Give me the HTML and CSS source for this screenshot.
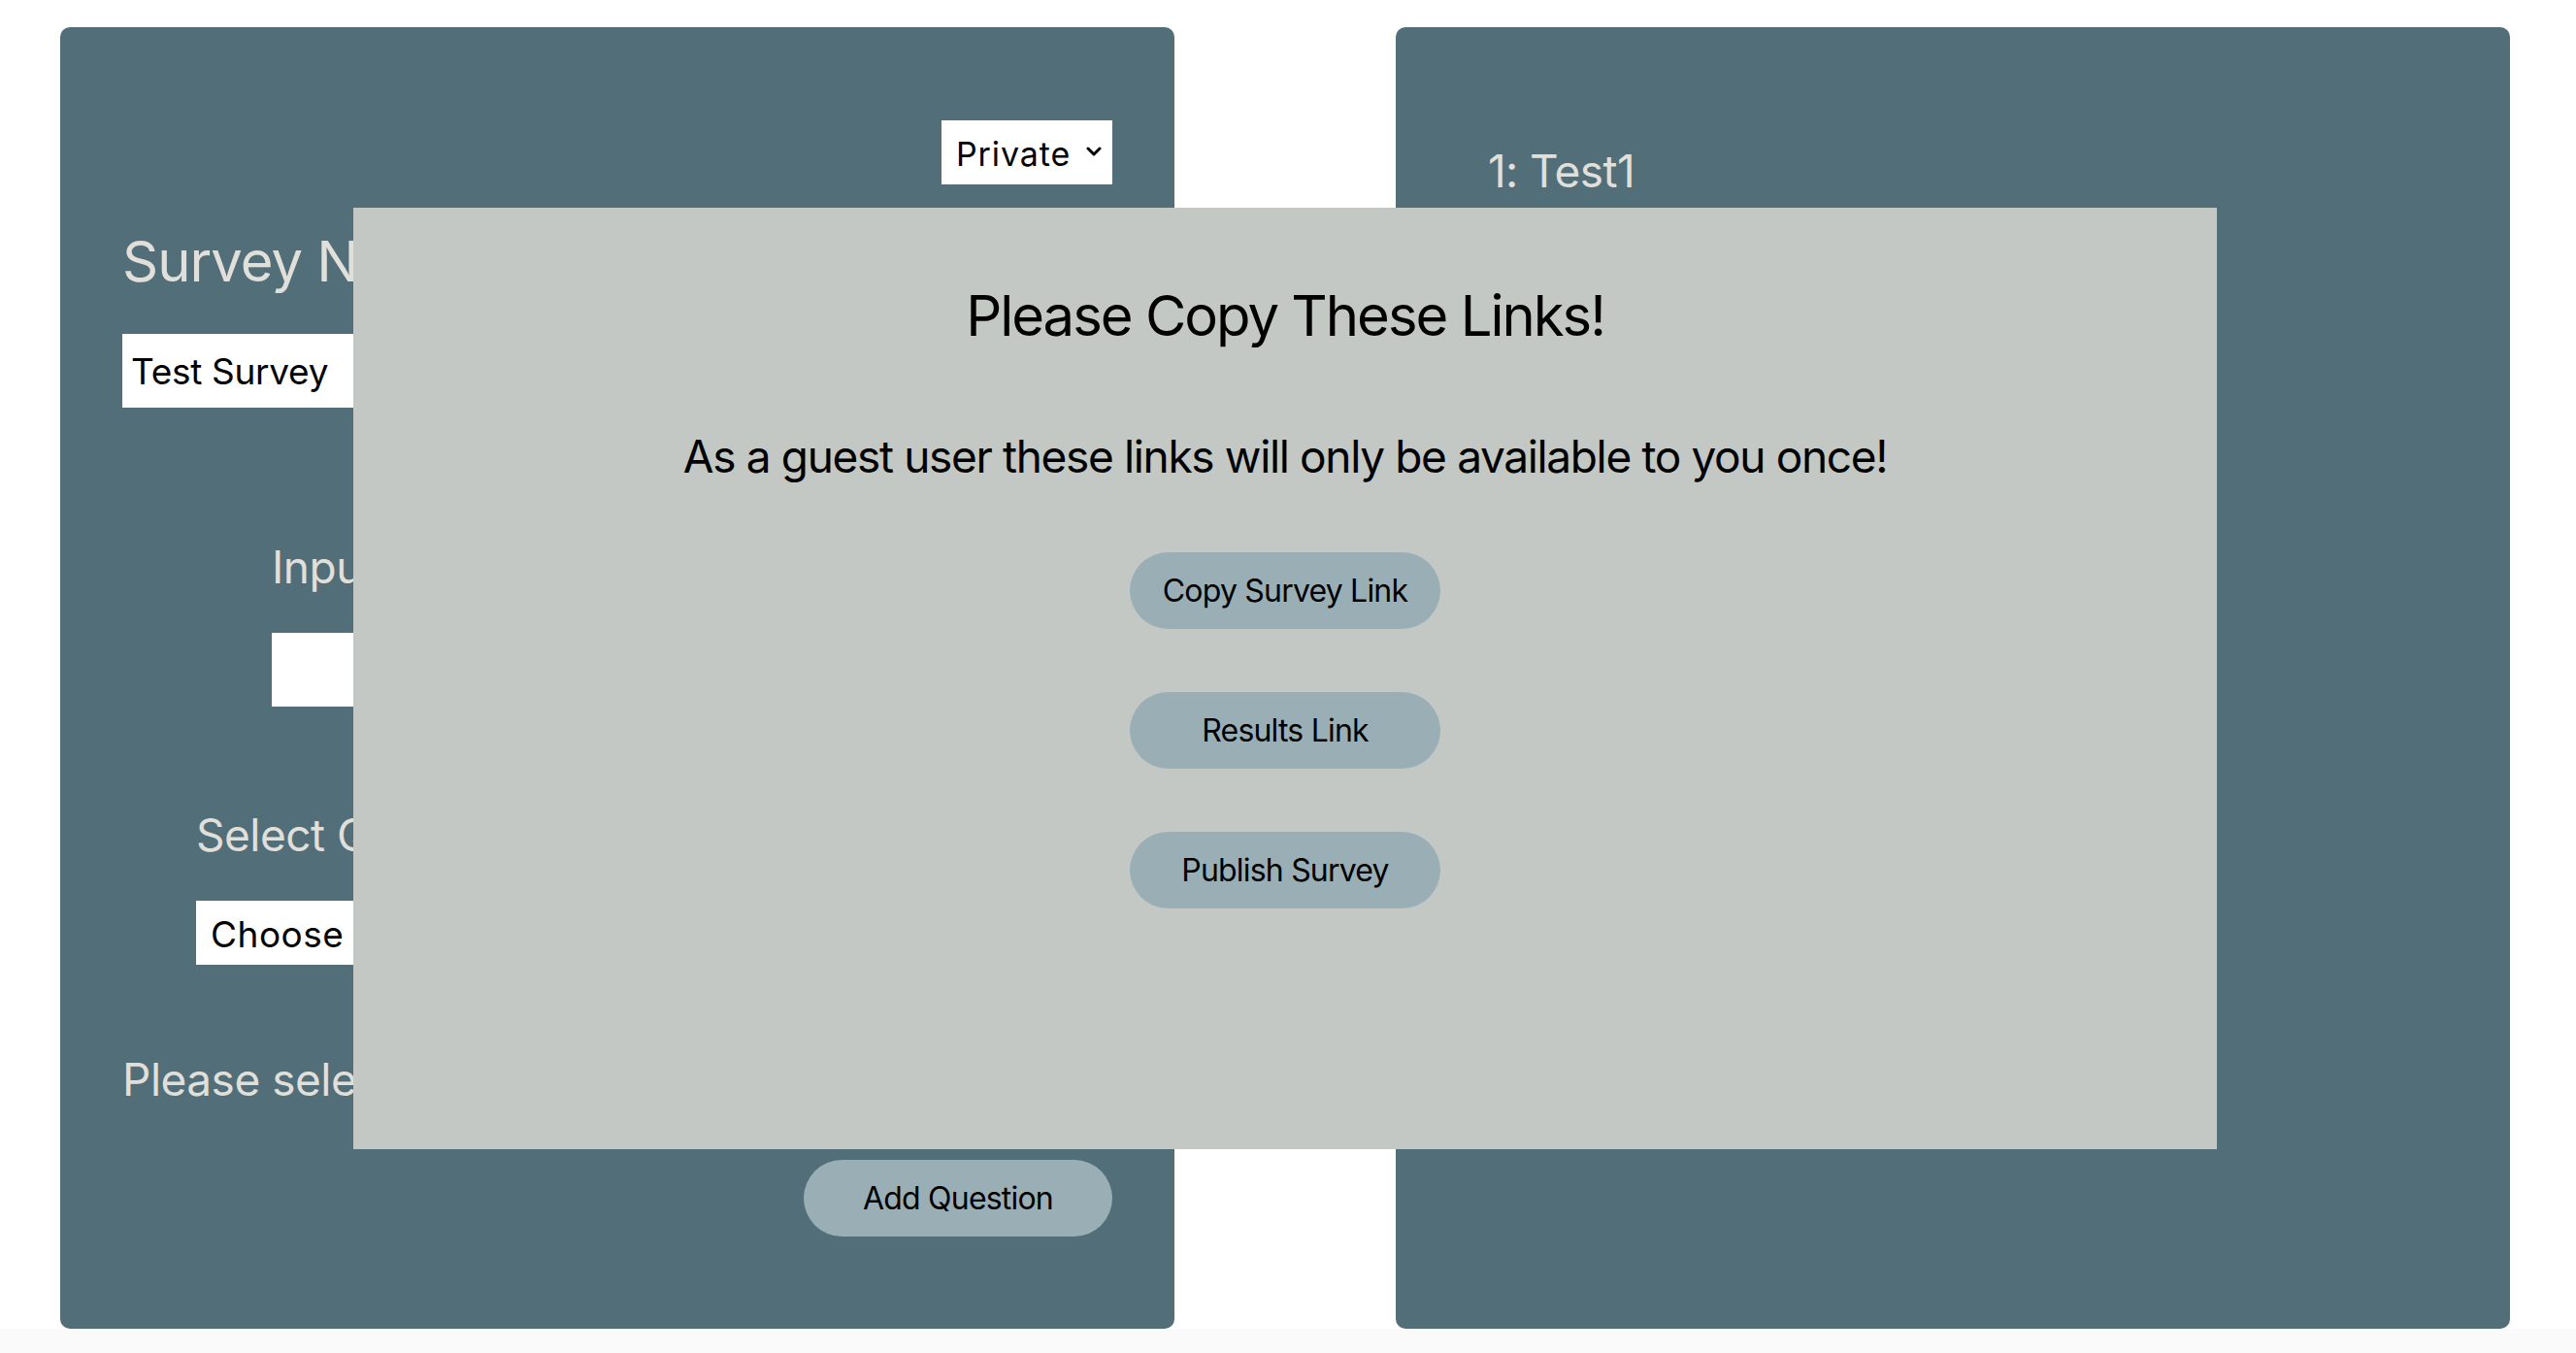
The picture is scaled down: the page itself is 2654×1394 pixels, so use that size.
FILE: index.html
```html
<!DOCTYPE html>
<html lang="en">
<head>
<meta charset="utf-8">
<title>Survey Builder</title>
<link rel="stylesheet" href="styles.css">
</head>
<body>
<div class="page">
  <main class="workspace">
    <section class="panel builder">
      <div class="privacy-row">
        <div class="select-wrap privacy">
          <select class="select privacy-select">
            <option>Private</option>
            <option>Public</option>
          </select>
          <svg class="chevron" viewBox="0 0 16 10" aria-hidden="true"><path d="M2 2 L8 8 L14 2"/></svg>
        </div>
      </div>
      <h2 class="panel-title">Survey Name:</h2>
      <input class="text-input name-input" type="text" value="Test Survey">
      <div class="field question-field">
        <label class="field-label">Input Question:</label>
        <input class="text-input question-input" type="text">
      </div>
      <div class="field type-field">
        <label class="field-label">Select Question Type:</label>
        <div class="select-wrap type">
          <select class="select type-select">
            <option>Choose question type</option>
          </select>
          <svg class="chevron" viewBox="0 0 16 10" aria-hidden="true"><path d="M2 2 L8 8 L14 2"/></svg>
        </div>
      </div>
      <p class="hint">Please select a question type</p>
      <div class="actions">
        <button class="pill" type="button">Add Question</button>
      </div>
    </section>
    <section class="panel preview">
      <p class="question-item">1: Test1</p>
    </section>
  </main>

  <div class="modal" role="dialog">
    <h2 class="modal-title">Please Copy These Links!</h2>
    <p class="modal-text">As a guest user these links will only be available to you once!</p>
    <div class="modal-actions">
      <button class="pill" type="button">Copy Survey Link</button>
      <button class="pill" type="button">Results Link</button>
      <button class="pill" type="button">Publish Survey</button>
    </div>
  </div>
</div>
</body>
</html>
```

FILE: styles.css
```css
html {
  background: #fafafa;
}

body {
  margin: 0;
  font-family: Inter, "Noto Sans", "Liberation Sans", sans-serif;
  background: #fafafa;
}

.page {
  position: relative;
  background: #ffffff;
  height: 1369px;
}

.workspace {
  display: flex;
  gap: 228px;
  padding: 28px 0 0 62px;
}

.panel {
  box-sizing: border-box;
  width: 1148px;
  height: 1341px;
  background: #526e79;
  border-radius: 10px;
  color: #e1dfda;
}

.builder {
  display: flex;
  flex-direction: column;
  padding: 96px 64px 0 64px;
}

.privacy-row {
  display: flex;
  justify-content: flex-end;
}

.select-wrap {
  position: relative;
  display: inline-block;
}

.select {
  -webkit-appearance: none;
  appearance: none;
  box-sizing: border-box;
  height: 66px;
  border: none;
  border-radius: 0;
  background: #ffffff;
  color: #000000;
  font-family: Inter, "Noto Sans", "Liberation Sans", sans-serif;
  font-size: 34px;
  letter-spacing: 0.9px;
  padding: 2px 40px 0 15px;
  margin: 0;
  outline: none;
}

.privacy-select {
  width: 176px;
}

.chevron {
  position: absolute;
  right: 11px;
  top: 27px;
  width: 16px;
  height: 10px;
  fill: none;
  stroke: #000000;
  stroke-width: 3;
  stroke-linecap: round;
  stroke-linejoin: round;
}

.panel-title {
  margin: 50px 0 0 0;
  font-size: 58px;
  line-height: 1;
  font-weight: 400;
  letter-spacing: -1px;
}

.text-input {
  box-sizing: border-box;
  height: 76px;
  border: none;
  border-radius: 0;
  background: #ffffff;
  color: #000000;
  font-family: Inter, "Noto Sans", "Liberation Sans", sans-serif;
  font-size: 37px;
  letter-spacing: -0.3px;
  padding: 0 9px;
  margin: 0;
  outline: none;
}

.name-input {
  margin-top: 46px;
  width: 560px;
}

.field {
  display: flex;
  flex-direction: column;
  align-items: flex-start;
}

.field-label {
  font-size: 46px;
  line-height: 1;
  letter-spacing: -0.5px;
}

.question-field {
  margin: 141px 0 0 154px;
}

.question-input {
  margin-top: 45px;
  width: 600px;
}

.type-field {
  margin: 109px 0 0 76px;
}

.type-field .select-wrap {
  margin-top: 45px;
}

.type-select {
  width: 440px;
  font-size: 37px;
  letter-spacing: 0.5px;
}

.hint {
  margin: 95px 0 0 0;
  font-size: 46px;
  line-height: 1;
  letter-spacing: -0.5px;
}

.actions {
  display: flex;
  justify-content: flex-end;
  margin-top: 60px;
}

.pill {
  width: 320px;
  height: 79px;
  border: none;
  border-radius: 40px;
  background: #99afb5;
  color: #000000;
  font-family: Inter, "Noto Sans", "Liberation Sans", sans-serif;
  font-size: 32px;
  letter-spacing: -0.8px;
  padding: 0;
  margin: 0;
}

.actions .pill {
  width: 318px;
}

.preview {
  padding: 125px 0 0 95px;
}

.question-item {
  margin: 0;
  font-size: 46px;
  line-height: 1;
  letter-spacing: -0.6px;
}

.modal {
  position: absolute;
  left: 364px;
  top: 214px;
  width: 1920px;
  height: 970px;
  box-sizing: border-box;
  padding-top: 82px;
  background: #c3c8c4;
  display: flex;
  flex-direction: column;
  align-items: center;
  color: #000000;
}

.modal-title {
  margin: 0;
  font-size: 58px;
  line-height: 1;
  font-weight: 400;
  letter-spacing: -2px;
}

.modal-text {
  margin: 93px 0 0 0;
  font-size: 46px;
  line-height: 1;
  letter-spacing: -1.35px;
}

.modal-actions {
  display: flex;
  flex-direction: column;
  gap: 65px;
  margin-top: 76px;
}
```
